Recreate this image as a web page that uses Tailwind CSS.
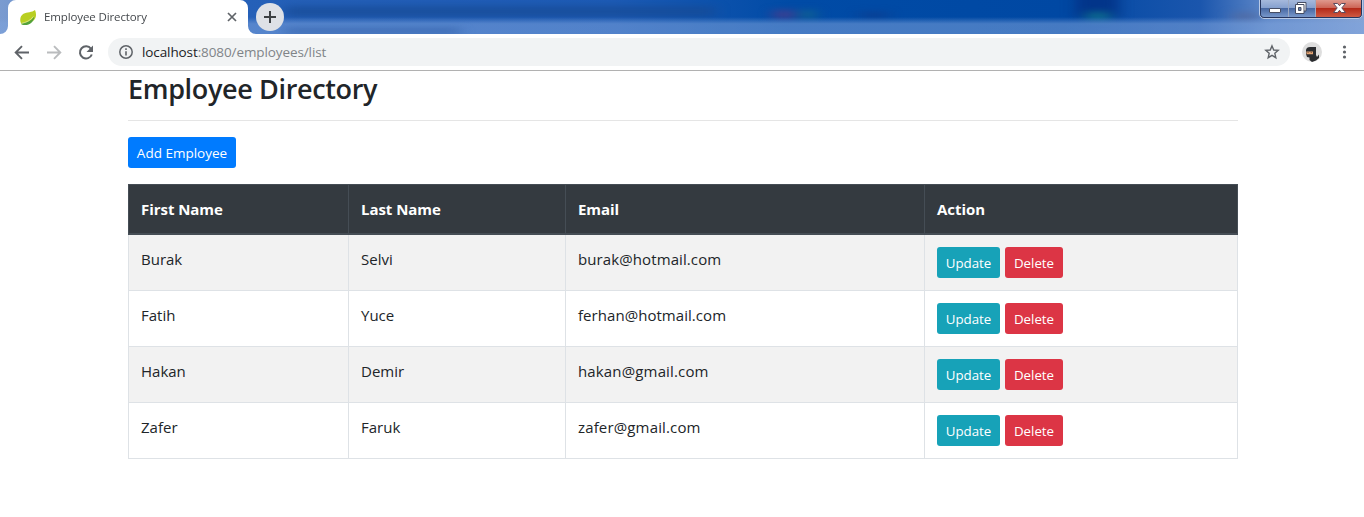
<!DOCTYPE html>
<html lang="en">
<head>
<meta charset="utf-8">
<title>Employee Directory</title>
<script src="https://cdn.jsdelivr.net/npm/@tailwindcss/browser@4"></script>
</head>
<body class="w-[1364px] h-[517px] overflow-hidden bg-white font-['Open_Sans',sans-serif] text-[#212529]">
<header class="flex h-[71px] flex-col border-b border-[#b1b1b1] bg-white">
  <!-- Window title bar and tabs -->
  <div class="relative flex h-[34px] overflow-hidden bg-[#1450a8]">
    <svg class="absolute inset-0" width="1364" height="34" viewBox="0 0 1364 34">
      <defs>
        <linearGradient id="sky"><stop offset="0" stop-color="#7a9bd0"/><stop offset=".18" stop-color="#2560b8"/><stop offset=".45" stop-color="#1c5ab4"/><stop offset=".58" stop-color="#004ba6"/><stop offset=".78" stop-color="#0048a3"/><stop offset=".88" stop-color="#1b56ad"/><stop offset=".93" stop-color="#5f88c8"/><stop offset="1" stop-color="#86a4d5"/></linearGradient>
        <linearGradient id="haze" x1="0" y1="0" x2="0" y2="1"><stop offset=".5" stop-color="#7ea3dc" stop-opacity="0"/><stop offset=".7" stop-color="#7ea3dc" stop-opacity=".55"/><stop offset="1" stop-color="#7ea3dc" stop-opacity=".55"/></linearGradient>
        <filter id="soft" filterUnits="userSpaceOnUse" x="0" y="-30" width="1364" height="100" color-interpolation-filters="sRGB"><feGaussianBlur stdDeviation="7 3"/></filter>
      </defs>
      <rect width="1364" height="34" fill="url(#sky)"/>
      <g filter="url(#soft)">
        <rect x="285" y="6" width="430" height="11" fill="#174a94" opacity=".7"/>
        <rect x="773" y="10" width="22" height="9" fill="#3c3f91"/>
        <rect x="800" y="10" width="16" height="9" fill="#0f6093"/>
        <rect x="860" y="12" width="28" height="6" fill="#0a3f93"/>
        <rect x="1075" y="-8" width="44" height="26" fill="#013083" opacity=".8"/>
        <rect x="1086" y="12" width="24" height="8" fill="#0d6b8d"/>
        <rect x="1232" y="12" width="26" height="9" fill="#52699f" opacity=".7"/>
      </g>
      <rect width="1364" height="34" fill="url(#haze)"/>
      <g filter="url(#soft)"><rect x="285" y="28" width="175" height="6" fill="#2c5aa2" opacity=".55"/></g>
      <path d="M0 34a8 8 0 0 0 8-8V8a8 8 0 0 1 8-8H240a8 8 0 0 1 8 8V26a8 8 0 0 0 8 8Z" fill="#fff"/>
    </svg>
    <div class="relative flex h-[34px] w-[248px] items-center pl-5">
      <svg width="17" height="17" viewBox="0 0 17 17">
        <path d="M15 1C12 3.500 7 3 3.500 4.800-.3 7-.5 12 1.500 15 6 14.500 9 14 12 12.500 17 10 16.500 4.500 15 1Z" fill="#b9cf22"/>
        <path d="M1.500 14.500C6 14 11.500 12 14.300 7.500 13.800 14 8 17.500 1.500 15.500Z" fill="#53a13b"/>
        <path d="M1.500 14.300C6 13.600 10.500 11.500 13.300 7.500" fill="none" stroke="#e3ecae" stroke-width=".7"/>
      </svg>
      <span class="ml-[7px] w-[150px] whitespace-nowrap text-[11.5px] leading-4 tracking-[-0.12px] text-[#45494d]">Employee Directory</span>
      <svg class="ml-[32px]" width="12" height="12" viewBox="0 0 12 12"><path d="M2 2l8 8M10 2l-8 8" stroke="#5f6368" stroke-width="1.700"/></svg>
    </div>
    <svg class="relative ml-2 mt-[3px]" width="28" height="28" viewBox="0 0 28 28"><circle cx="14" cy="14" r="14" fill="#dee1e6"/><path d="M14 8v12M8 14h12" stroke="#3c4043" stroke-width="2"/></svg>
    <svg class="relative ml-auto" width="105" height="20" viewBox="0 0 105 20">
      <defs>
        <linearGradient id="glass" x1="0" y1="0" x2="0" y2="1"><stop offset="0" stop-color="#a6b9dc"/><stop offset=".48" stop-color="#849fce"/><stop offset=".5" stop-color="#4868a3"/><stop offset="1" stop-color="#7898cb"/></linearGradient>
        <linearGradient id="close" x1="0" y1="0" x2="0" y2="1"><stop offset="0" stop-color="#df998d"/><stop offset=".45" stop-color="#cd6657"/><stop offset=".5" stop-color="#b42a19"/><stop offset="1" stop-color="#cf5a43"/></linearGradient>
      </defs>
      <path d="M.5-1V14a4.500 4.500 0 0 0 4.500 4.500H99a4.500 4.500 0 0 0 4.500-4.500V-1" fill="#26355e" stroke="#b9cae6"/>
      <path d="M2 0H29V17H5a3 3 0 0 1-3-3Z" fill="url(#glass)"/>
      <path d="M30 0H56V17H30Z" fill="url(#glass)"/>
      <path d="M57 0H102V14a3 3 0 0 1-3 3H57Z" fill="url(#close)"/>
      <path d="M29.500 0V17M56.500 0V17" stroke="#d0daec" stroke-width="1" opacity=".7"/>
      <rect x="10.500" y="8.500" width="11" height="4" rx=".5" fill="#fff" stroke="#464d63"/>
      <path d="M38.500 2.500h8.500v8.500h-8.500Z" fill="#fff" stroke="#464d63"/>
      <path d="M36.500 4.500h8.500v9h-8.500Z" fill="#fff" stroke="#464d63"/>
      <path d="M39.500 7.500h2.500v3h-2.500Z" fill="#6980ad" stroke="#464d63"/>
      <path d="M74.500 3.500h4l2 2.200 2-2.200h4l-3.700 4.400 3.700 4.600h-4l-2-2.200-2 2.200h-4l3.700-4.600Z" fill="#fff" stroke="#5d4b5e"/>
    </svg>
  </div>
  <!-- Address bar -->
  <div class="flex h-9 items-center">
    <svg class="ml-3 mt-px" width="20" height="20" viewBox="0 0 20 20" fill="none" stroke="#5f6368" stroke-width="1.900"><path d="M17 9.500H4M10 3.200 3.700 9.500 10 15.800"/></svg>
    <svg class="ml-3 mt-px" width="20" height="20" viewBox="0 0 20 20" fill="none" stroke="#babcbe" stroke-width="1.900"><path d="M3 9.500H16M10 3.200l6.300 6.300L10 15.800"/></svg>
    <svg class="ml-3 mt-px" width="20" height="20" viewBox="0 0 20 20"><path d="M15 5.800A6.100 6.100 0 1 0 15.800 11.500" fill="none" stroke="#5f6368" stroke-width="2"/><path d="M17 2.500V9h-6.500Z" fill="#5f6368"/></svg>
    <div class="ml-3 flex h-7 w-[1182px] items-center rounded-full bg-[#f1f3f4] pl-[10px] pr-[10px]">
      <svg width="16" height="16" viewBox="0 0 16 16"><circle cx="8" cy="8" r="6.200" fill="none" stroke="#5f6368" stroke-width="1.500"/><path d="M8 7.200v4.300M8 4.300v1.600" stroke="#5f6368" stroke-width="1.600"/></svg>
      <span class="ml-2 whitespace-nowrap text-[13.5px] leading-5 tracking-[-0.1px] text-[#808488]"><span class="text-[#202124]">localhost</span>:8080/employees/list</span>
      <svg class="ml-auto" width="16" height="16" viewBox="0 0 16 16"><path d="M8 1.900l1.750 4.100 4.450.4-3.380 2.940 1 4.360L8 11.400l-3.820 2.300 1-4.360L1.800 6.400l4.450-.4Z" fill="none" stroke="#5f6368" stroke-width="1.400"/></svg>
    </div>
    <svg class="ml-3" width="20" height="20" viewBox="0 0 20 20"><circle cx="10" cy="10" r="10" fill="#dedede"/><path d="M4 8Q4.500 5 8 5H14V13L15 15 17 12.500V16L14 18.500 10 20 7.500 18V15.500L5 15 4 12Z" fill="#2a2c2f"/><path d="M4.300 9.500H11V12.300H4.600Z" fill="#e3a474"/><path d="M5.500 10.500h1.200M8.700 10.500h1.200" stroke="#7a573f" stroke-width=".9"/></svg>
    <svg class="ml-[14px]" width="17" height="20" viewBox="0 0 17 20" fill="#5f6368"><circle cx="8.500" cy="5" r="1.600"/><circle cx="8.500" cy="10" r="1.600"/><circle cx="8.500" cy="15" r="1.600"/></svg>
  </div>
</header>
<main class="ml-32 w-[1110px]">
  <h1 class="flex h-[50px] items-start whitespace-nowrap border-b border-[#e5e5e5] text-[27px] font-semibold leading-[36px] tracking-[-0.35px]">Employee Directory</h1>
  <a class="mt-4 flex h-[31px] w-[108px] items-center justify-center whitespace-nowrap rounded-[3px] bg-[#007bff] pt-px text-[13.5px] text-white">Add Employee</a>
  <div class="mt-4 text-[15px] leading-6">
    <div class="grid h-[51px] grid-cols-[220px_217px_359px_314px] border-t border-b-2 border-[#454d55] bg-[#343a40] font-bold tracking-[-0.05px] text-white">
      <div class="border-l border-[#454d55] pl-3 pt-3">First Name</div>
      <div class="border-l border-[#454d55] pl-3 pt-3">Last Name</div>
      <div class="border-l border-[#454d55] pl-3 pt-3">Email</div>
      <div class="border-x border-[#454d55] pl-3 pt-3">Action</div>
    </div>
    <div class="grid h-14 grid-cols-[220px_217px_359px_314px] border-b border-[#dee2e6] bg-[#f2f2f2]">
      <div class="border-l border-[#dee2e6] pl-3 pt-3">Burak</div>
      <div class="border-l border-[#dee2e6] pl-3 pt-3">Selvi</div>
      <div class="border-l border-[#dee2e6] pl-3 pt-3 tracking-[0.1px]">burak@hotmail.com</div>
      <div class="flex gap-[5px] border-x border-[#dee2e6] pl-3 pt-3 text-[13.3px] text-white"><a class="flex h-[31px] w-[63px] items-center justify-center rounded-[3px] bg-[#17a2b8]">Update</a><a class="flex h-[31px] w-[58px] items-center justify-center rounded-[3px] bg-[#dc3545]">Delete</a></div>
    </div>
    <div class="grid h-14 grid-cols-[220px_217px_359px_314px] border-b border-[#dee2e6]">
      <div class="border-l border-[#dee2e6] pl-3 pt-3">Fatih</div>
      <div class="border-l border-[#dee2e6] pl-3 pt-3">Yuce</div>
      <div class="border-l border-[#dee2e6] pl-3 pt-3 tracking-[0.05px]">ferhan@hotmail.com</div>
      <div class="flex gap-[5px] border-x border-[#dee2e6] pl-3 pt-3 text-[13.3px] text-white"><a class="flex h-[31px] w-[63px] items-center justify-center rounded-[3px] bg-[#17a2b8]">Update</a><a class="flex h-[31px] w-[58px] items-center justify-center rounded-[3px] bg-[#dc3545]">Delete</a></div>
    </div>
    <div class="grid h-14 grid-cols-[220px_217px_359px_314px] border-b border-[#dee2e6] bg-[#f2f2f2]">
      <div class="border-l border-[#dee2e6] pl-3 pt-3">Hakan</div>
      <div class="border-l border-[#dee2e6] pl-3 pt-3">Demir</div>
      <div class="border-l border-[#dee2e6] pl-3 pt-3 tracking-[0.15px]">hakan@gmail.com</div>
      <div class="flex gap-[5px] border-x border-[#dee2e6] pl-3 pt-3 text-[13.3px] text-white"><a class="flex h-[31px] w-[63px] items-center justify-center rounded-[3px] bg-[#17a2b8]">Update</a><a class="flex h-[31px] w-[58px] items-center justify-center rounded-[3px] bg-[#dc3545]">Delete</a></div>
    </div>
    <div class="grid h-14 grid-cols-[220px_217px_359px_314px] border-b border-[#dee2e6]">
      <div class="border-l border-[#dee2e6] pl-3 pt-3">Zafer</div>
      <div class="border-l border-[#dee2e6] pl-3 pt-3">Faruk</div>
      <div class="border-l border-[#dee2e6] pl-3 pt-3 tracking-[0.15px]">zafer@gmail.com</div>
      <div class="flex gap-[5px] border-x border-[#dee2e6] pl-3 pt-3 text-[13.3px] text-white"><a class="flex h-[31px] w-[63px] items-center justify-center rounded-[3px] bg-[#17a2b8]">Update</a><a class="flex h-[31px] w-[58px] items-center justify-center rounded-[3px] bg-[#dc3545]">Delete</a></div>
    </div>
  </div>
</main>
</body>
</html>
